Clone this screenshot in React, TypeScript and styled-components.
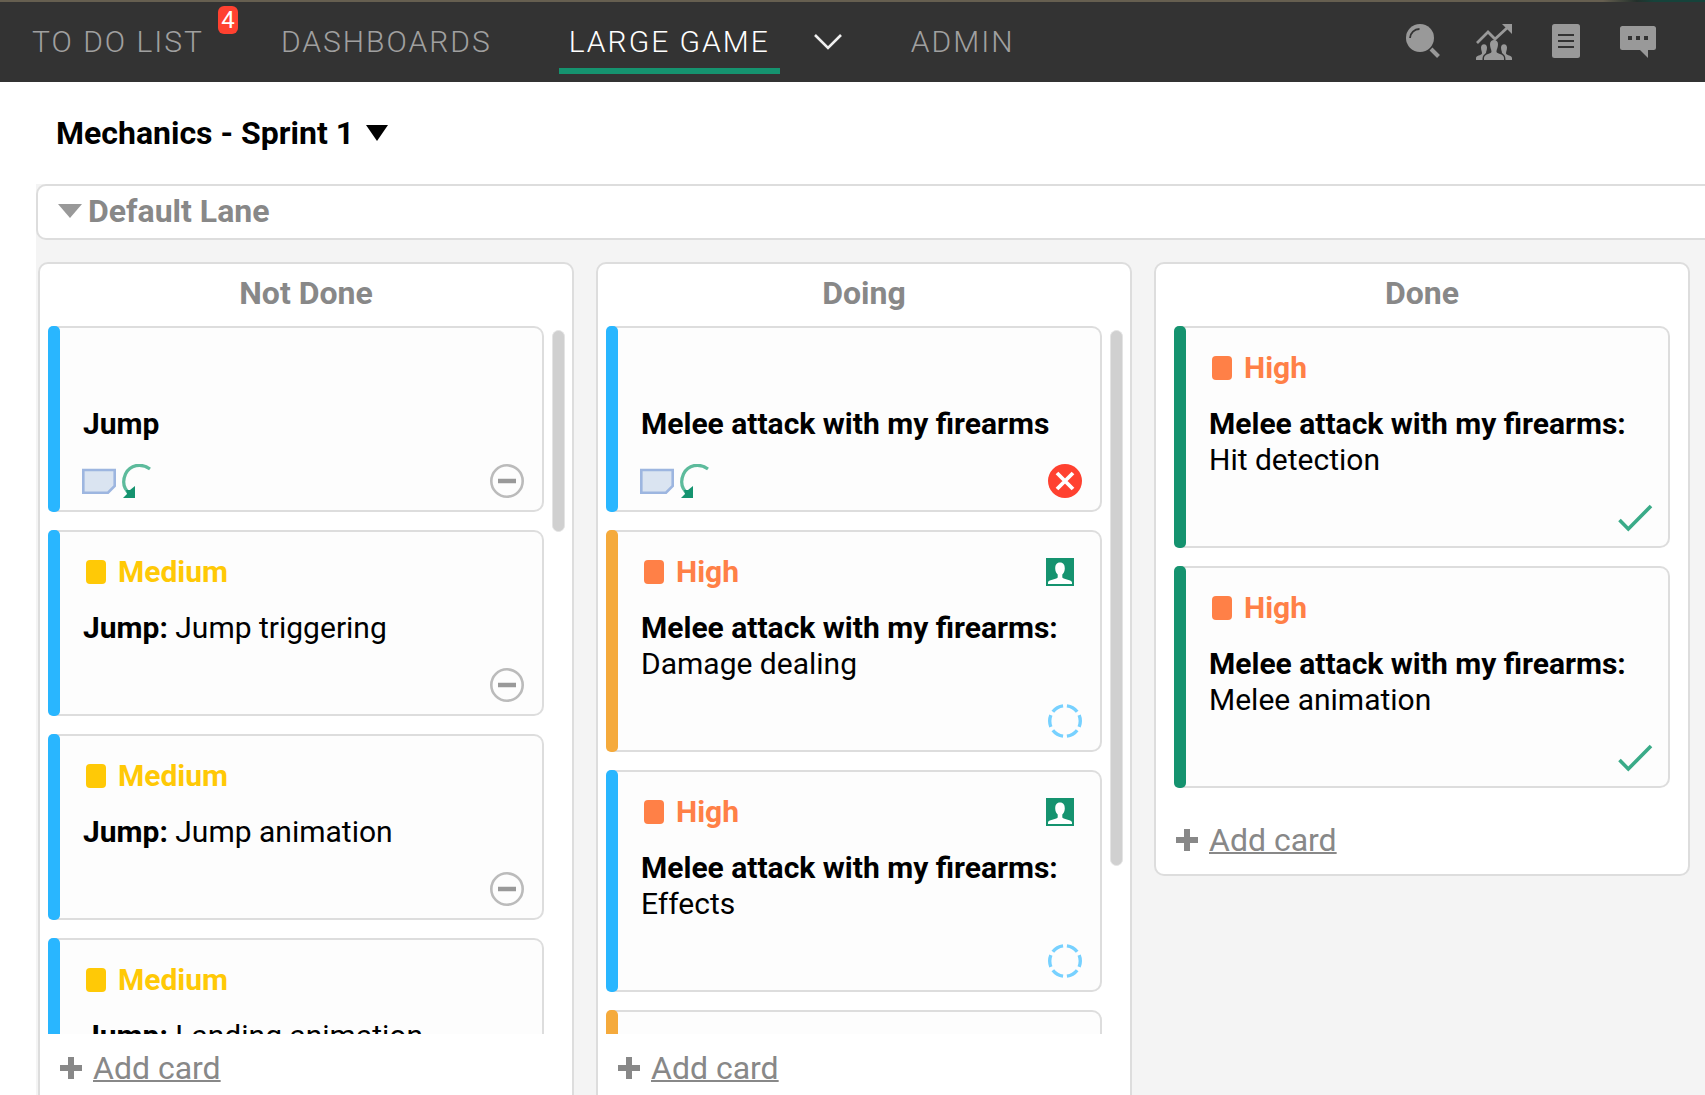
import React from "react";
import styled, { createGlobalStyle } from "styled-components";

const color = {
  bar: "#333333",
  navText: "#a0a0a0",
  icon: "#999999",
  green: "#15936f",
  blue: "#29b6ff",
  orange: "#f5aa3c",
  red: "#ff4130",
  high: "#ff8047",
  medium: "#ffc906",
  line: "#dddddd",
  muted: "#888888",
  board: "#f4f4f4",
};

const GlobalStyle = createGlobalStyle`
  *, *::before, *::after { box-sizing: border-box; }
  body {
    margin: 0;
    overflow: hidden;
    background: #ffffff;
    color: #000000;
    font-family: Roboto, "Liberation Sans", sans-serif;
    font-size: 30px;
    line-height: 36px;
  }
  h1, h2, h3, p { margin: 0; font-size: inherit; font-weight: inherit; }
  button {
    padding: 0;
    border: 0;
    background: none;
    color: inherit;
    font: inherit;
    cursor: pointer;
  }
  svg { display: block; }
`;

const Page = styled.div`
  display: flex;
  flex-direction: column;
  height: 100vh;
`;

const TopStrip = styled.div`
  flex: none;
  height: 2px;
  background: linear-gradient(to right, #665f50 94%, #22302b 96%, #16433b 97%);
`;

const TopBar = styled.header`
  flex: none;
  display: flex;
  justify-content: space-between;
  height: 80px;
  padding: 0 49px 0 22px;
  background: ${color.bar};
`;

const Nav = styled.nav`
  display: flex;
  align-items: flex-start;
  gap: 57px;
`;

const NavGroup = styled.div`
  display: flex;
  align-items: flex-start;
  gap: 32px;
`;

const NavLink = styled.a<{ $active?: boolean }>`
  position: relative;
  padding: 22px 10px 8px;
  border-bottom: 6px solid ${(p) => (p.$active ? color.green : "transparent")};
  color: ${(p) => (p.$active ? "#ffffff" : color.navText)};
  font-weight: 300;
  letter-spacing: 2px;
  text-decoration: none;
  white-space: nowrap;
`;

const Badge = styled.span`
  position: absolute;
  top: 4px;
  left: calc(100% + 4px);
  width: 20px;
  border-radius: 6px;
  background: ${color.red};
  color: #ffffff;
  font-size: 24px;
  font-weight: 400;
  line-height: 28px;
  letter-spacing: 0;
  text-align: center;
`;

const NavToggle = styled.button`
  display: flex;
  align-items: center;
  justify-content: center;
  width: 32px;
  height: 80px;
`;

const Tools = styled.div`
  display: flex;
  align-items: center;
  gap: 36px;
  color: ${color.icon};
`;

const BoardTitle = styled.div`
  flex: none;
  display: flex;
  align-items: center;
  height: 102px;
  padding: 0 56px;
`;

const SprintPicker = styled.button`
  display: flex;
  align-items: center;
  gap: 12px;
  font-weight: 700;
  font-size: 32px;
`;

const Board = styled.main`
  flex: 1;
  margin-left: 36px;
  background: ${color.board};
`;

const LaneHeader = styled.button`
  display: flex;
  align-items: center;
  gap: 6px;
  width: calc(100% + 12px);
  height: 56px;
  padding: 0 20px 2px;
  border: 2px solid ${color.line};
  border-radius: 10px;
  background: #ffffff;
  color: ${color.muted};
  font-size: 32px;
  font-weight: 700;
`;

const Columns = styled.div`
  display: grid;
  grid-template-columns: repeat(3, minmax(0, 1fr));
  align-items: start;
  gap: 22px;
  padding: 22px 15px 22px 2px;
`;

const ColumnBox = styled.section`
  border: 2px solid ${color.line};
  border-radius: 10px;
  background: #ffffff;
`;

const ColumnTitle = styled.h2`
  padding: 11px 0 15px;
  color: ${color.muted};
  font-size: 32px;
  font-weight: 700;
  text-align: center;
`;

const ColumnBody = styled.div<{ $scrolls: boolean }>`
  display: flex;
  gap: 8px;
  max-height: calc(100vh - 387px);
  padding: ${(p) => (p.$scrolls ? "0 7px 0 8px" : "0 18px")};
`;

const CardList = styled.div`
  flex: 1;
  min-width: 0;
  overflow-y: auto;
  scrollbar-width: none;
`;

const ScrollThumb = styled.div<{ $size: number }>`
  flex: none;
  width: 13px;
  height: ${(p) => p.$size}px;
  margin-top: 4px;
  border: 1px solid #e4e4e4;
  border-radius: 7px;
  background: #d0d0d0;
`;

const CardBox = styled.article`
  display: flex;
  margin-bottom: 18px;
`;

const StripeLayer = styled.div`
  display: flex;
  z-index: 1;
`;

const Stripe = styled.div<{ $color: string }>`
  flex: none;
  width: 12px;
  border-radius: 5px;
  background: ${(p) => p.$color};
`;

const CardBody = styled.div`
  flex: 1;
  min-width: 0;
  margin-left: -6px;
  padding: 22px 18px 12px 28px;
  border: 2px solid ${color.line};
  border-left: 0;
  border-radius: 0 10px 10px 0;
  background: #fdfdfd;
  background-clip: padding-box;
`;

const CardTop = styled.div`
  display: flex;
  align-items: center;
  justify-content: space-between;
  height: 36px;
  margin-bottom: 20px;
  padding: 0 8px 0 4px;
`;

const Priority = styled.span<{ $color: string }>`
  display: flex;
  align-items: center;
  gap: 12px;
  color: ${(p) => p.$color};
  font-weight: 700;

  &::before {
    content: "";
    width: 20px;
    height: 24px;
    border-radius: 4px;
    background: currentColor;
  }
`;

const CardTitle = styled.p`
  min-height: 36px;
  padding-left: 1px;
`;

const Story = styled.span`
  font-weight: 700;
`;

const CardBottom = styled.div`
  display: flex;
  align-items: center;
  justify-content: space-between;
  height: 34px;
  margin-top: 22px;
`;

const CardMarks = styled.div`
  display: flex;
  align-items: center;
  gap: 6px;
`;

const StatusSvg = styled.svg`
  overflow: visible;
`;

const ColumnFooter = styled.div`
  display: flex;
  align-items: center;
  gap: 11px;
  padding: 16px 20px;
  color: ${color.muted};
`;

const AddLink = styled.a`
  color: inherit;
  font-size: 32px;
  text-decoration: underline;
  text-decoration-thickness: 2px;
  text-decoration-skip-ink: none;
  text-underline-offset: 1px;
`;

function SearchIcon() {
  return (
    <svg width="36" height="36" viewBox="0 0 36 36">
      <circle cx="16" cy="14" r="14" fill="currentColor" />
      <path d="M6 14 A9.500 9.500 0 0 1 15.500 5" fill="none" stroke={color.bar} strokeWidth="1.8" />
      <path d="M27 25 L34.5 32.5" stroke="currentColor" strokeWidth="4" />
    </svg>
  );
}

function TrendIcon() {
  return (
    <svg width="36" height="36" viewBox="0 0 36 36" fill="currentColor">
      <path d="M1 19 L12 8 L19 15 L31 4" fill="none" stroke="currentColor" strokeWidth="2.8" />
      <path d="M26 0 H36 V10 Z" />
      <path d="M14 20 C14 14.500 22 14.500 22 20 C22 24 20.500 25 20.500 28 C21.500 30 28 30 28 34 V36 H8 V34 C8 30 14.500 30 15.500 28 C15.500 25 14 24 14 20 Z" />
      <path d="M5 23.500 C5 19 11 19 11 23.500 C11 26.500 10 27 10 29 C7.500 31 6.500 32 6.500 36 H0 V34 C0 31.500 5 31.500 6 29.500 C6 27 5 26.500 5 23.500 Z" />
      <path d="M31 23.500 C31 19 25 19 25 23.500 C25 26.500 26 27 26 29 C28.500 31 29.500 32 29.500 36 H36 V34 C36 31.500 31 31.500 30 29.500 C30 27 31 26.500 31 23.500 Z" />
    </svg>
  );
}

function NotesIcon() {
  return (
    <svg width="36" height="36" viewBox="0 0 36 36">
      <rect x="4" y="0" width="28" height="34" rx="2.500" fill="currentColor" />
      <path d="M10 11 H26 M10 17 H26 M10 23 H26" stroke={color.bar} strokeWidth="2" />
    </svg>
  );
}

function ChatIcon() {
  return (
    <svg width="36" height="36" viewBox="0 0 36 36">
      <path
        d="M2.500 2 H33.500 Q36 2 36 4.500 V23.500 Q36 26 33.500 26 H28 V34 L20 26 H2.500 Q0 26 0 23.500 V4.500 Q0 2 2.500 2 Z"
        fill="currentColor"
      />
      <path d="M8 12 h4 v4 h-4 z M16 12 h4 v4 h-4 z M24 12 h4 v4 h-4 z" fill={color.bar} />
    </svg>
  );
}

function ChevronIcon() {
  return (
    <svg width="28" height="18" viewBox="0 0 28 18">
      <path d="M1 2 L14 15 L27 2" fill="none" stroke="#f0f0f0" strokeWidth="2.6" />
    </svg>
  );
}

function Caret({ width, height, fill }: { width: number; height: number; fill: string }) {
  return (
    <svg width={width} height={height} viewBox="0 0 22 16" preserveAspectRatio="none">
      <path d="M0 0 H22 L11 16 Z" fill={fill} />
    </svg>
  );
}

function StoryIcon() {
  return (
    <svg width="34" height="34" viewBox="0 0 34 34">
      <path d="M1.300 6 H32.700 V22 L26 28.700 H1.300 Z" fill="#dae4f1" stroke="#9db6e0" strokeWidth="2.600" />
    </svg>
  );
}

function ReturnIcon() {
  return (
    <svg width="30" height="34" viewBox="0 0 30 34">
      <path d="M28 5 C19 -1.500 8 1 3.500 10 C0 18 2 25 8 30" fill="none" stroke="#5dbb9c" strokeWidth="3.200" />
      <path d="M13 22 V34 H1 L5 30 L4 26 H8 Z" fill={color.green} />
    </svg>
  );
}

function PersonIcon() {
  return (
    <svg width="28" height="28" viewBox="0 0 28 28" role="img" aria-label="Assigned">
      <rect width="28" height="28" fill={color.green} />
      <path
        d="M14 4.500 C17.500 4.500 18.800 7 18.800 10.500 C18.800 13.500 17.500 15.500 16.300 16.500 V19.500 C18 21.500 26 21.500 26 24.500 V26 H2 V24.500 C2 21.500 10 21.500 11.700 19.500 V16.500 C10.500 15.500 9.200 13.500 9.200 10.500 C9.200 7 10.500 4.500 14 4.500 Z"
        fill="#ffffff"
      />
    </svg>
  );
}

function PlusIcon() {
  return (
    <svg width="22" height="22" viewBox="0 0 22 22">
      <path d="M11 0 V22 M0 11 H22" stroke="currentColor" strokeWidth="6" />
    </svg>
  );
}

type Status = "open" | "blocked" | "progress" | "done";

function StatusIcon({ status }: { status: Status }) {
  return (
    <StatusSvg width="34" height="34" viewBox="0 0 34 34" role="img" aria-label={status} fill="none">
      {status === "open" && (
        <>
          <circle cx="17" cy="17" r="15.700" stroke="#bbbbbb" strokeWidth="2.600" />
          <path d="M8 17 H26" stroke="#999999" strokeWidth="4.500" />
        </>
      )}
      {status === "blocked" && (
        <>
          <circle cx="17" cy="17" r="17" fill={color.red} />
          <path d="M9 9 L25 25 M25 9 L9 25" stroke="#ffffff" strokeWidth="3.800" />
        </>
      )}
      {status === "progress" && (
        <circle
          cx="17"
          cy="17"
          r="15.300"
          stroke="#77d1ff"
          strokeWidth="3.400"
          pathLength="60"
          strokeDasharray="7.500 2.500"
          strokeDashoffset="3.750"
        />
      )}
      {status === "done" && <path d="M3.500 20 L12.300 29 L35 6" stroke="#3aab88" strokeWidth="3.600" />}
    </StatusSvg>
  );
}

type CardData = {
  stripe: string;
  priority?: "High" | "Medium";
  assigned?: boolean;
  story?: string;
  task?: string;
  status: Status;
};

const melee = "Melee attack with my firearms";

const columns: { title: string; thumb?: number; cards: CardData[] }[] = [
  {
    title: "Not Done",
    thumb: 202,
    cards: [
      { stripe: color.blue, story: "Jump", status: "open" },
      { stripe: color.blue, priority: "Medium", story: "Jump", task: "Jump triggering", status: "open" },
      { stripe: color.blue, priority: "Medium", story: "Jump", task: "Jump animation", status: "open" },
      { stripe: color.blue, priority: "Medium", story: "Jump", task: "Landing animation", status: "open" },
    ],
  },
  {
    title: "Doing",
    thumb: 536,
    cards: [
      { stripe: color.blue, story: melee, status: "blocked" },
      { stripe: color.orange, priority: "High", assigned: true, story: melee, task: "Damage dealing", status: "progress" },
      { stripe: color.blue, priority: "High", assigned: true, story: melee, task: "Effects", status: "progress" },
      { stripe: color.orange, status: "progress" },
    ],
  },
  {
    title: "Done",
    cards: [
      { stripe: color.green, priority: "High", story: melee, task: "Hit detection", status: "done" },
      { stripe: color.green, priority: "High", story: melee, task: "Melee animation", status: "done" },
    ],
  },
];

function Card({ card }: { card: CardData }) {
  const isStory = Boolean(card.story) && !card.task;
  return (
    <CardBox>
      <StripeLayer>
        <Stripe $color={card.stripe} />
      </StripeLayer>
      <CardBody>
        <CardTop>
          {card.priority && (
            <Priority $color={card.priority === "High" ? color.high : color.medium}>{card.priority}</Priority>
          )}
          {card.assigned && <PersonIcon />}
        </CardTop>
        <CardTitle>
          <Story>{card.task ? `${card.story}:` : card.story}</Story>
          {card.task && ` ${card.task}`}
        </CardTitle>
        <CardBottom>
          <CardMarks>
            {isStory && (
              <>
                <StoryIcon />
                <ReturnIcon />
              </>
            )}
          </CardMarks>
          <StatusIcon status={card.status} />
        </CardBottom>
      </CardBody>
    </CardBox>
  );
}

export default function App() {
  return (
    <Page>
      <GlobalStyle />
      <TopStrip />
      <TopBar>
        <Nav>
          <NavLink href="#todo">
            TO DO LIST
            <Badge>4</Badge>
          </NavLink>
          <NavLink href="#dashboards">DASHBOARDS</NavLink>
          <NavGroup>
            <NavLink href="#game" $active>
              LARGE GAME
            </NavLink>
            <NavToggle aria-label="Switch project">
              <ChevronIcon />
            </NavToggle>
          </NavGroup>
          <NavLink href="#admin">ADMIN</NavLink>
        </Nav>
        <Tools>
          <button aria-label="Search"><SearchIcon /></button>
          <button aria-label="Team statistics"><TrendIcon /></button>
          <button aria-label="Notes"><NotesIcon /></button>
          <button aria-label="Messages"><ChatIcon /></button>
        </Tools>
      </TopBar>
      <BoardTitle>
        <h1>
          <SprintPicker>
            Mechanics - Sprint 1
            <Caret width={22} height={16} fill="#000000" />
          </SprintPicker>
        </h1>
      </BoardTitle>
      <Board>
        <LaneHeader aria-expanded="true">
          <Caret width={24} height={14} fill="#999999" />
          Default Lane
        </LaneHeader>
        <Columns>
          {columns.map((column) => (
            <ColumnBox key={column.title}>
              <ColumnTitle>{column.title}</ColumnTitle>
              <ColumnBody $scrolls={column.thumb !== undefined}>
                <CardList>
                  {column.cards.map((card, i) => (
                    <Card key={i} card={card} />
                  ))}
                </CardList>
                {column.thumb !== undefined && <ScrollThumb $size={column.thumb} />}
              </ColumnBody>
              <ColumnFooter>
                <PlusIcon />
                <AddLink href="#add">Add card</AddLink>
              </ColumnFooter>
            </ColumnBox>
          ))}
        </Columns>
      </Board>
    </Page>
  );
}
